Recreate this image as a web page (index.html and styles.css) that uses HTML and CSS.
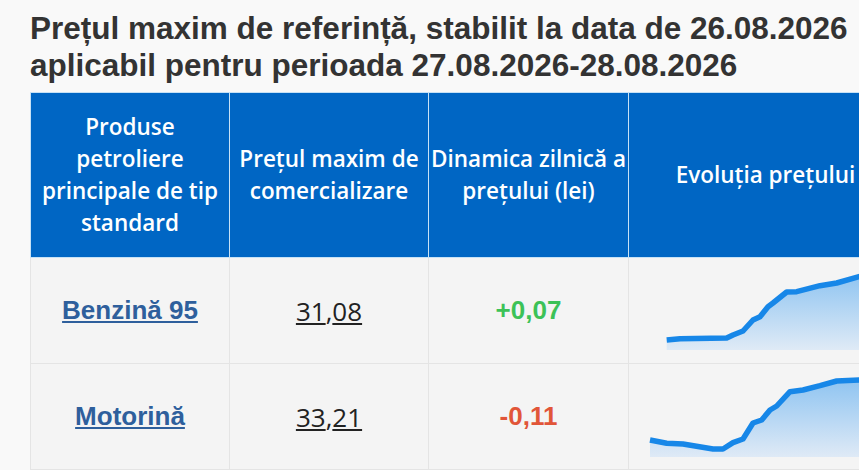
FILE: index.html
```html
<!DOCTYPE html>
<html lang="ro">
<head>
<meta charset="utf-8">
<title>Prețul maxim de referință</title>
<link rel="stylesheet" href="styles.css">
</head>
<body>
<h1 class="title">Prețul maxim de referință, stabilit la data de 26.08.2026 aplicabil pentru perioada 27.08.2026-28.08.2026</h1>
<table class="prices">
  <colgroup>
    <col class="c1"><col class="c2"><col class="c3"><col class="c4">
  </colgroup>
  <thead>
    <tr>
      <th class="h-product">Produse petroliere principale de tip standard</th>
      <th>Prețul maxim de comercializare</th>
      <th>Dinamica zilnică a prețului (lei)</th>
      <th>Evoluția prețului</th>
    </tr>
  </thead>
  <tbody>
    <tr>
      <td class="product"><a href="#">Benzină 95</a></td>
      <td class="price"><span class="u">31</span>,<span class="u">08</span></td>
      <td class="delta up">+0,07</td>
      <td class="chart">
        <svg class="spark" width="240" height="105" viewBox="0 0 240 105">
          <defs>
            <linearGradient id="g1" x1="0" y1="0" x2="0" y2="1">
              <stop offset="0" stop-color="#8fc4f1"/>
              <stop offset="1" stop-color="#dfeaf6"/>
            </linearGradient>
          </defs>
          <path d="M37.7 82 L51 80.7 L97.7 80 L104 77 L114 73 L124 62 L131 58.7 L139 48.7 L144 45 L157.7 34 L167.7 33.7 L191 27.7 L207.7 25 L230 18.7 L240 16 L240 92 L37.7 92 Z" fill="url(#g1)"/>
          <path d="M37.7 82 L51 80.7 L97.7 80 L104 77 L114 73 L124 62 L131 58.7 L139 48.7 L144 45 L157.7 34 L167.7 33.7 L191 27.7 L207.7 25 L230 18.7 L240 16" fill="none" stroke="#1787e8" stroke-width="5.5" stroke-linejoin="round"/>
        </svg>
      </td>
    </tr>
    <tr>
      <td class="product"><a href="#">Motorină</a></td>
      <td class="price"><span class="u">33</span>,<span class="u">21</span></td>
      <td class="delta down">-0,11</td>
      <td class="chart">
        <svg class="spark" width="240" height="105" viewBox="0 0 240 105">
          <defs>
            <linearGradient id="g2" x1="0" y1="0" x2="0" y2="1">
              <stop offset="0" stop-color="#8fc4f1"/>
              <stop offset="1" stop-color="#dfeaf6"/>
            </linearGradient>
          </defs>
          <path d="M21 76 L37.7 79.3 L54 80 L84 85 L94 85 L104 78.7 L114 75 L124 59 L132.7 56 L141 46 L147.7 42 L161 27.7 L174 26 L191 21.7 L207.7 17 L230 16 L240 16 L240 93 L21 93 Z" fill="url(#g2)"/>
          <path d="M21 76 L37.7 79.3 L54 80 L84 85 L94 85 L104 78.7 L114 75 L124 59 L132.7 56 L141 46 L147.7 42 L161 27.7 L174 26 L191 21.7 L207.7 17 L230 16 L240 16" fill="none" stroke="#1787e8" stroke-width="5.5" stroke-linejoin="round"/>
        </svg>
      </td>
    </tr>
  </tbody>
</table>
</body>
</html>
```
FILE: styles.css
```css
html, body {
  margin: 0;
  padding: 0;
  background: #f9f9f9;
  overflow: hidden;
}
body {
  padding: 10px 0 0 30px;
  width: 900px;
}
.title {
  margin: 0 0 8px 0;
  font-family: "Liberation Sans", Arial, sans-serif;
  font-weight: bold;
  font-size: 31.5px;
  line-height: 37px;
  color: #333333;
  width: 845px;
}
.prices {
  border-collapse: collapse;
  table-layout: fixed;
  width: 872px;
}
.c1 { width: 199px; }
.c2 { width: 199px; }
.c3 { width: 200px; }
.c4 { width: 274px; }
.prices th {
  background: #0066c4;
  color: #ffffff;
  font-family: "Open Sans", sans-serif;
  font-weight: 600;
  font-size: 22.5px;
  line-height: 32px;
  height: 164px;
  padding: 0 1px;
  text-align: center;
  vertical-align: middle;
  border: 1px solid #c7e2f6;
}
.prices th.h-product {
  padding: 0 8px;
}
.prices td {
  background: #f4f4f4;
  border: 1px solid #e4e4e4;
  height: 105px;
  padding: 0;
  text-align: center;
  vertical-align: middle;
}
.product a {
  font-family: "Liberation Sans", Arial, sans-serif;
  font-weight: bold;
  font-size: 26px;
  color: #2e5f9c;
  text-decoration: underline;
}
.price {
  font-family: "Open Sans", sans-serif;
  font-size: 26px;
  color: #222222;
}
.price .u {
  text-decoration: underline;
}
.delta {
  font-family: "Liberation Sans", Arial, sans-serif;
  font-weight: bold;
  font-size: 26px;
}
.delta.up { color: #3cc257; }
.delta.down { color: #e15538; }
.prices td.chart {
  text-align: left;
  vertical-align: top;
}
.spark {
  display: block;
}
```
